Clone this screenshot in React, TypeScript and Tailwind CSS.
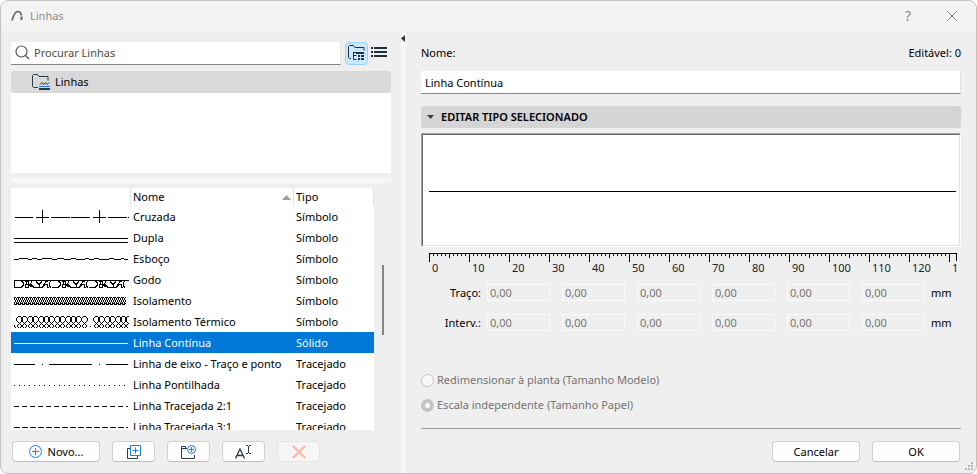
import { useState } from 'react';
import type { ReactNode } from 'react';

type LineType = {
  name: string;
  kind: string;
  preview: ReactNode;
};

const range = (n: number) => Array.from({ length: n }, (_, i) => i);

// Posição de cada laço do isolamento térmico, com a falha entre os dois grupos
const LOOPS = [...range(13).map((i) => 5 + i * 5.4), ...range(7).map((i) => 82 + i * 5.4)];

const LINES: LineType[] = [
  {
    name: 'Cruzada',
    kind: 'Símbolo',
    preview: (
      <path d="M1 11.5h18M22 11.5h13M37 11.5h19M57 11.5h19M79 11.5h13M94 11.5h19M114 11.5h1M28.5 4v13M85.5 4v13" />
    ),
  },
  { name: 'Dupla', kind: 'Símbolo', preview: <path d="M0 11.5h114M0 15.5h114" /> },
  {
    name: 'Esboço',
    kind: 'Símbolo',
    preview: (
      <path d="M0 11.5h5M5 10.5h9M14 11.5h4M18 10.5h5M23 11.5h5M28 10.5h10M38 11.5h5M43 10.5h7M50 11.5h7M57 10.5h5M62 11.5h9M71 10.5h4M75 11.5h5M80 10.5h5M85 11.5h10M95 10.5h5M100 11.5h7M107 10.5h3M110 11.5h4" />
    ),
  },
  {
    name: 'Godo',
    kind: 'Símbolo',
    preview: (
      <>
        <path d="M0 11.5h115M.5 11v8" />
        {[0, 37, 74].map((x) => (
          <g key={x} transform={`translate(${x} 0)`}>
            <path d="M1 18.5h6l2-2v-3l-2-2M11 12.500h3M14.500 12v6M13 13l-2 5M11 18.500h3l2-3 2-3M12 15.500h5l3 3h3M15 16l3 2" />
            <path d="M22 12.500l3 3 3-3M25.500 15v3.500M22 18.500h6l4-6M34 12.500h-2M29 18l3-3M30 15.500h3v3h2M37 12l-2 2v3l2 1.500" />
          </g>
        ))}
      </>
    ),
  },
  {
    name: 'Isolamento',
    kind: 'Símbolo',
    preview: range(28).map((i) => (
      <path
        key={i}
        transform={`translate(${i * 4} 0)`}
        d="M0 7.5h2m1 0h1M0 8.500h1m1 0h1M0 9.500h1m1 0h1M1 10.500h1m1 0h1M1 11.500h1m1 0h1M0 12.500h1m1 0h1M0 13.500h1m1 0h2M0 14.500h3"
      />
    )),
  },
  {
    name: 'Isolamento Térmico',
    kind: 'Símbolo',
    preview: (
      <>
        {LOOPS.map((x) => (
          <g key={x} transform={`translate(${Math.round(x)} 0)`}>
            <path d="M-1 5.500h3M-1.500 6v1M2.500 6v1M-2.500 7v3M3.500 7v3M-1.500 10v1M2.500 10v1M-.5 11v1M1.500 11v1M0 12.500h1" />
            <path d="M-.5 13v1M1.500 13v1M-1.500 14v2M2.500 14v2M-1 16.500h1M1 16.500h1" />
          </g>
        ))}
        <path d="M.5 14v2M1 16.500h1M76 15.500h1" />
      </>
    ),
  },
  { name: 'Linha Contínua', kind: 'Sólido', preview: <path d="M0 11.5h114" /> },
  {
    name: 'Linha de eixo - Traço e ponto',
    kind: 'Tracejado',
    preview: <path d="M0 11.5h21M28 11.5h1M35 11.5h43M85 11.5h1M92 11.5h22" />,
  },
  {
    name: 'Linha Pontilhada',
    kind: 'Tracejado',
    preview: <path d="M0 11.5h115" strokeDasharray="1 4" />,
  },
  {
    name: 'Linha Tracejada 2:1',
    kind: 'Tracejado',
    preview: <path d="M0 11.5h114" strokeDasharray="5 3" />,
  },
  {
    name: 'Linha Tracejada 3:1',
    kind: 'Tracejado',
    preview: <path d="M0 11.5h114" strokeDasharray="6 2" />,
  },
];

const SEGMENTS = ['1', '2', '3', '4', '5', '6'];

function TitleBar() {
  return (
    <header className="flex h-[30px] shrink-0 items-center bg-[#f3f3f3] pr-2 pl-2.5 text-[#8b8b8b]">
      <svg className="mr-[7px] h-3 w-3" viewBox="0 0 12 12" fill="none" stroke="#5c6167">
        <path d="M1 10.500C2.500 5 4.500 1.500 7 1.500c2.300 0 3 1.500 3.500 4" strokeWidth="1.700" />
        <path d="M10.500 6.500V10" strokeWidth="2" />
      </svg>
      <h1 className="flex-1">Linhas</h1>
      <button aria-label="Ajuda" className="w-8 text-sm">
        ?
      </button>
      <button aria-label="Fechar" className="ml-3 flex w-8 justify-center">
        <svg className="h-3 w-3" viewBox="0 0 12 12" fill="none" stroke="currentColor">
          <path d="M1 1l10 10M11 1L1 11" />
        </svg>
      </button>
    </header>
  );
}

function SearchRow() {
  return (
    <div className="flex h-6 shrink-0 items-center">
      <label className="mr-1 flex h-[23px] min-w-0 flex-1 items-center border-r border-b border-r-[#e2e2e2] border-b-[#858585] bg-white pl-1">
        <svg className="h-[15px] w-[15px] shrink-0" viewBox="0 0 15 15" fill="none" stroke="#555" strokeWidth="1.200">
          <circle cx="6.500" cy="6.500" r="5.500" />
          <path d="M10.500 10.500L14 14" />
        </svg>
        <input
          type="text"
          aria-label="Procurar Linhas"
          placeholder="Procurar Linhas"
          className="w-full min-w-0 bg-transparent pl-1 placeholder-[#4a4a4a] outline-none"
        />
      </label>
      <button
        aria-label="Vista em pastas"
        className="flex h-[23px] w-[23px] items-center justify-center rounded-sm border border-[#99d1ff] bg-[#cce8ff]"
      >
        <svg className="h-4 w-[17px]" viewBox="0 0 17 16" fill="none" stroke="#22303a">
          <path d="M3 13.500H1.500L.5 12.500V1.500l1-1h4l1.500 2h9v3" />
          <path d="M5.500 7v7.500h3M5.500 7.500h3M5.500 10.500h3" />
          <path d="M8 8h8M10 11h2M13 11h3M10 14h2M13 14h3" strokeWidth="2" />
        </svg>
      </button>
      <button aria-label="Vista em lista" className="ml-[3px] flex w-5 items-center">
        <svg className="h-3 w-4" viewBox="0 0 16 12" fill="#22303a">
          <path d="M0 0h2v2H0zM3 0h13v2H3zM0 4h2v2H0zM3 4h13v2H3zM0 8h2v2H0zM3 8h13v2H3z" />
        </svg>
      </button>
    </div>
  );
}

function FolderTree() {
  return (
    <div className="mt-[6px] h-[102px] shrink-0 bg-white">
      <button className="flex h-[22px] w-full items-center rounded-xs bg-[#d9d9d9] pl-[21px] text-left">
        <svg className="mr-1 h-4 w-[19px]" viewBox="0 0 19 16" fill="none" stroke="#2b3942">
          <path d="M6 13.500H1.500L.5 12.500V1.500l1-1h4l1.500 2h9v4" />
          <path d="M8 10.500l2-2 1.500 2 2-2 1.500 2 2-2" />
          <path d="M7 12.500h11" stroke="#1f7cf2" />
          <path d="M7 15h11" strokeWidth="2" />
        </svg>
        Linhas
      </button>
    </div>
  );
}

function LineTable({ selected, onSelect }: { selected: string; onSelect: (name: string) => void }) {
  return (
    <div className="flex min-h-0 flex-1">
      <div className="min-w-0 flex-1 overflow-hidden bg-white">
        <table className="w-full table-fixed border-separate border-spacing-0 text-left">
          <thead>
            <tr className="h-[18px]">
              <th aria-label="Amostra" className="w-[120px] border-r border-[#e0e0e0] p-0" />
              <th className="border-r border-[#e0e0e0] py-0 pr-0.5 pl-0.5 font-normal">
                <span className="flex items-center justify-between leading-[18px]">
                  Nome
                  <svg className="h-[5px] w-[9px]" viewBox="0 0 9 5" fill="#a0a0a0">
                    <path d="M4.500 0L9 5H0z" />
                  </svg>
                </span>
              </th>
              <th className="w-20 border-r border-[#e0e0e0] py-0 pl-0.5 leading-[18px] font-normal">Tipo</th>
            </tr>
          </thead>
          <tbody>
            {LINES.map((line) => (
              <tr
                key={line.name}
                onClick={() => onSelect(line.name)}
                className={
                  line.name === selected ? 'h-[21px] bg-[#0078d7] text-white' : 'h-[21px] text-black'
                }
              >
                <td className="p-0 pl-[3px]">
                  <svg
                    className="block h-[21px] w-[115px]"
                    viewBox="0 0 115 21"
                    fill="none"
                    stroke="currentColor"
                    shapeRendering="crispEdges"
                  >
                    {line.preview}
                  </svg>
                </td>
                <td className="truncate py-0 pl-0.5 leading-[21px]">{line.name}</td>
                <td className="py-0 pl-0.5 leading-[21px]">{line.kind}</td>
              </tr>
            ))}
          </tbody>
        </table>
      </div>
      <div className="w-[17px] shrink-0 pt-[77px] pl-2">
        <div className="h-[70px] w-0.5 bg-[#858585]" />
      </div>
    </div>
  );
}

const TOOL_BUTTON =
  'flex h-[21px] w-[43px] items-center justify-center rounded-sm border border-[#d0d0d0] border-b-[#bcbcbc] bg-[#fdfdfd]';

function ListActions() {
  return (
    <div className="flex h-[21px] shrink-0 gap-3 pl-px">
      <button className="flex w-[88px] items-center justify-center gap-1.5 rounded-sm border border-[#d0d0d0] border-b-[#bcbcbc] bg-[#fdfdfd]">
        <svg className="h-[13px] w-[13px]" viewBox="0 0 13 13" fill="none" stroke="#1f7cf2">
          <circle cx="6.500" cy="6.500" r="6" />
          <path d="M6.500 3v7M3 6.500h7" />
        </svg>
        Novo...
      </button>
      <button aria-label="Duplicar" className={TOOL_BUTTON}>
        <svg className="h-[14px] w-[14px]" viewBox="0 0 14 14" fill="none">
          <path d="M3 3.500H.5v10h10V11" stroke="#2b3942" />
          <path d="M3.500.5h10v10h-10zM8.500 2.500v6M5.500 5.500h6" stroke="#1f7cf2" />
        </svg>
      </button>
      <button aria-label="Nova pasta" className={TOOL_BUTTON}>
        <svg className="h-[14px] w-[16px]" viewBox="0 0 16 14" fill="none">
          <path d="M6 3.500H.5M4.500 3.500v-2H.5v12h13V10" stroke="#2b3942" />
          <circle cx="10.500" cy="4.500" r="4" stroke="#1f7cf2" />
          <path d="M10.500 2v5M8 4.500h5" stroke="#1f7cf2" />
        </svg>
      </button>
      <button aria-label="Renomear" className={TOOL_BUTTON}>
        <svg className="h-[14px] w-[17px]" viewBox="0 0 17 14" fill="none" stroke="#2b3942">
          <path d="M.5 13.500L5 4l4.500 9.500M2.500 10.500h5" strokeWidth="1.300" />
          <path d="M11 .5h2M14 .5h2M13.500 1v7M11 8.500h2M14 8.500h2" />
        </svg>
      </button>
      <button
        aria-label="Eliminar"
        disabled
        className="flex h-[21px] w-[43px] items-center justify-center rounded-sm border border-[#e4e4e4] bg-[#f6f6f6]"
      >
        <svg className="h-[14px] w-[14px]" viewBox="0 0 14 14" fill="none" stroke="#ffb3a3" strokeWidth="2">
          <path d="M1 1l12 12M13 1L1 13" />
        </svg>
      </button>
    </div>
  );
}

function Ruler() {
  return (
    <svg
      className="mt-[6px] mr-1 ml-2 block h-[24px] w-[528px] max-w-[calc(100%-12px)] min-w-0 overflow-hidden"
      stroke="black"
      shapeRendering="crispEdges"
    >
      <path d="M0 .5h4000" />
      {range(131).map((mm) => (
        <path key={mm} d={`M${mm * 4 + 0.5} 0v${mm % 10 === 0 ? 9 : mm % 5 === 0 ? 5 : 3}`} />
      ))}
      <path d="M527.500 0v8" />
      {range(14).map((n) => (
        <text key={n} x={n * 40 + 3} y="19" fill="#222" stroke="none">
          {n * 10}
        </text>
      ))}
    </svg>
  );
}

function SegmentRow({ id, label }: { id: string; label: string }) {
  return (
    <div className="flex h-[17px] items-center">
      <span id={id} className="w-[60px] shrink-0 text-right">
        {label}
      </span>
      <div className="ml-[6px] flex gap-3">
        {SEGMENTS.map((n) => (
          <input
            key={n}
            type="text"
            disabled
            aria-labelledby={id}
            defaultValue="0,00"
            className="h-[17px] w-[63px] border border-[#fafafa] bg-[#efefef] pl-0.5 text-[#757575]"
          />
        ))}
      </div>
      <span className="ml-[6px]">mm</span>
    </div>
  );
}

const RADIO =
  'h-[13px] w-[13px] appearance-none rounded-full border border-[#c4c4c4] bg-[#f9f9f9] checked:border-4 checked:bg-white';

function Editor({ name, onRename }: { name: string; onRename: (name: string) => void }) {
  return (
    <main className="flex min-w-0 flex-1 flex-col pt-3 pr-[15px] pb-[11px] pl-[15px]">
      <div className="flex h-5 items-center justify-between">
        <label htmlFor="line-name">Nome:</label>
        <span>Editável: 0</span>
      </div>
      <input
        id="line-name"
        type="text"
        value={name}
        onChange={(e) => onRename(e.target.value)}
        className="mt-2 h-[23px] w-full shrink-0 border-r border-b border-r-[#e2e2e2] border-b-[#858585] bg-white pl-1 outline-none"
      />

      <button className="mt-3 flex h-[22px] shrink-0 items-center rounded-xs bg-[#d5d5d5] pl-[6px] font-semibold">
        <svg className="mr-[7px] h-1 w-[7px]" viewBox="0 0 7 4" fill="#3c3c3c">
          <path d="M0 0h7L3.500 4z" />
        </svg>
        EDITAR TIPO SELECIONADO
      </button>

      <div className="mt-[5px] flex h-[114px] shrink-0 border border-t-[#a0a0a0] border-r-white border-b-white border-l-[#a0a0a0]">
        <div className="flex w-full items-center border border-t-[#696969] border-r-[#e3e3e3] border-b-[#e3e3e3] border-l-[#696969] bg-white pt-0.5 pr-[3px] pl-[6px]">
          <div className="h-px w-full bg-black" />
        </div>
      </div>

      <Ruler />

      <div className="mt-[7px] flex flex-col gap-[13px]">
        <SegmentRow id="dash" label="Traço:" />
        <SegmentRow id="gap" label="Interv.:" />
      </div>

      <fieldset disabled className="mt-auto flex flex-col gap-[9px] text-[#737373]">
        <label className="flex h-4 items-center gap-[3px]">
          <input type="radio" name="scale" className={RADIO} />
          Redimensionar à planta (Tamanho Modelo)
        </label>
        <label className="flex h-4 items-center gap-[3px]">
          <input type="radio" name="scale" defaultChecked className={RADIO} />
          Escala independente (Tamanho Papel)
        </label>
      </fieldset>

      <div className="mt-[15px] flex shrink-0 justify-end gap-3 border-t border-[#a0a0a0] pt-3 pr-px">
        <button className="h-[21px] w-[88px] rounded-sm border border-[#d0d0d0] border-b-[#bcbcbc] bg-[#fdfdfd]">
          Cancelar
        </button>
        <button className="h-[21px] w-[88px] rounded-sm border border-[#d0d0d0] border-b-[#bcbcbc] bg-[#fdfdfd]">
          OK
        </button>
      </div>
    </main>
  );
}

export default function App() {
  const [selected, setSelected] = useState('Linha Contínua');
  const [name, setName] = useState('Linha Contínua');

  const handleSelect = (line: string) => {
    setSelected(line);
    setName(line);
  };

  return (
    <div className="relative flex h-screen flex-col overflow-hidden rounded-lg border border-[#c3c3c3] bg-[#efefef] font-['Noto_Sans','Open_Sans',sans-serif] text-[11px] leading-4 text-black">
      <TitleBar />
      <div className="flex min-h-0 flex-1">
        <section className="flex w-[400px] shrink-0 flex-col pt-2.5 pb-[11px] pl-2.5">
          <div className="flex min-h-0 flex-1 flex-col pr-2.5">
            <SearchRow />
            <FolderTree />
            <div className="mt-[5px] mb-[5px] h-[5px] shrink-0 bg-[#f7f7f7]" />
            <LineTable selected={selected} onSelect={handleSelect} />
          </div>
          <div className="mt-[11px]">
            <ListActions />
          </div>
        </section>
        <div className="w-[5px] shrink-0 bg-[#f7f7f7] pt-1">
          <svg className="h-[7px] w-1" viewBox="0 0 4 7" fill="#333">
            <path d="M4 0v7L0 3.500z" />
          </svg>
        </div>
        <Editor name={name} onRename={setName} />
      </div>
      <svg className="absolute right-[3px] bottom-[3px] h-2 w-2" viewBox="0 0 8 8" fill="#b8b8b8">
        <path d="M6 0h2v2H6zM3 3h2v2H3zM6 3h2v2H6zM0 6h2v2H0zM3 6h2v2H3zM6 6h2v2H6z" />
      </svg>
    </div>
  );
}
